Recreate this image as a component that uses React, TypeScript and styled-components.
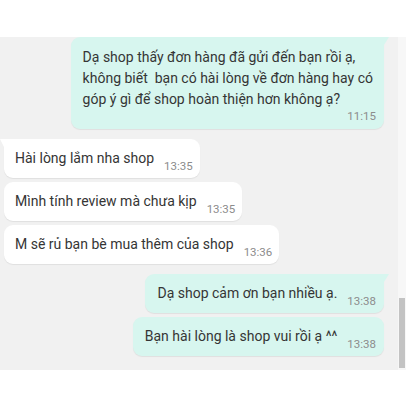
import styled, { createGlobalStyle, css } from "styled-components"

const GlobalStyle = createGlobalStyle`
  html, body {
    margin: 0;
    padding: 0;
    background: #ffffff;
  }
  body {
    font-family: Roboto, "Noto Sans", "Liberation Sans", sans-serif;
    color: #333333;
  }
`

interface IMessage {
  text: string,
  time: string,
  mine: boolean,
  first?: boolean,
  stacked?: boolean
}

const messages: IMessage[] = [
  {
    text: "Dạ shop thấy đơn hàng đã gửi đến bạn rồi ạ,\nkhông biết  bạn có hài lòng về đơn hàng hay có\ngóp ý gì để shop hoàn thiện hơn không ạ?",
    time: "11:15",
    mine: true,
    first: true,
    stacked: true
  },
  { text: "Hài lòng lắm nha shop", time: "13:35", mine: false, first: true },
  { text: "Mình tính review mà chưa kịp", time: "13:35", mine: false },
  { text: "M sẽ rủ bạn bè mua thêm của shop", time: "13:36", mine: false },
  { text: "Dạ shop cảm ơn bạn nhiều ạ.", time: "13:38", mine: true, first: true },
  { text: "Bạn hài lòng là shop vui rồi ạ ^^", time: "13:38", mine: true }
]

const App = () => {
  return <>
    <GlobalStyle />
    <Page>
      <Panel>
        <List>
          {messages.map((m, i) => (
            <Bubble key={i} $mine={m.mine} $first={!!m.first} $stacked={!!m.stacked} $top={i === 0}>
              <Text>{m.text}</Text>
              <Time $stacked={!!m.stacked}>{m.time}</Time>
            </Bubble>
          ))}
        </List>
        <Track>
          <Thumb />
        </Track>
      </Panel>
    </Page>
  </>
}

const Page = styled.div`
  width: 406px;
  height: 406px;
  padding-top: 37px;
  box-sizing: border-box;
  background: #ffffff;
`

const Panel = styled.div`
  height: 333px;
  background: #f1f1f1;
  display: flex;
  overflow: hidden;
`

const List = styled.div`
  flex: 1;
  display: flex;
  flex-direction: column;
  gap: 4px;
  padding: 0 14px 0 4px;
`

const Bubble = styled.div<{ $mine: boolean, $first: boolean, $stacked: boolean, $top: boolean }>`
  position: relative;
  display: flex;
  align-items: flex-end;
  border-radius: 9px;
  padding: 9px 7px 9px 11px;
  background: #ffffff;
  box-shadow: 0 1px 1px rgba(0, 0, 0, 0.07);
  align-self: flex-start;

  ${p => p.$first && !p.$top && css`
    margin-top: 6px;
  `}

  ${p => p.$mine && css`
    align-self: flex-end;
    background: #d7f6ef;
    padding-left: 12px;
    padding-right: 8px;
  `}

  ${p => p.$stacked && css`
    flex-direction: column;
    align-items: stretch;
    padding: 10px 11px 6px 12px;
  `}

  ${p => p.$first && p.$mine && css`
    border-top-right-radius: 0;
    &:after{
      content:'';
      position: absolute;
      top: 0;
      right: -5px;
      border-top: 8px solid #d7f6ef;
      border-right: 5px solid transparent;
    }
  `}

  ${p => p.$first && !p.$mine && css`
    border-top-left-radius: 0;
    &:after{
      content:'';
      position: absolute;
      top: 0;
      left: -4px;
      border-top: 8px solid #ffffff;
      border-left: 4px solid transparent;
    }
  `}
`

const Text = styled.div`
  font-size: 14px;
  line-height: 21px;
  white-space: pre-wrap;
  color: #353535;
`

const Time = styled.span<{ $stacked: boolean }>`
  font-size: 11.5px;
  line-height: 14px;
  color: #8c8c8c;
  margin-left: 10px;
  margin-bottom: -4px;

  ${p => p.$stacked && css`
    align-self: flex-end;
    margin: -1px -3px 0 0;
  `}
`

const Track = styled.div`
  width: 8px;
  background: #f7f7f7;
  display: flex;
  flex-direction: column;
  justify-content: flex-end;
  padding: 0 1px 2px 1px;
  box-sizing: border-box;
`

const Thumb = styled.div`
  height: 70px;
  background: #c3c3c3;
`

export default App
